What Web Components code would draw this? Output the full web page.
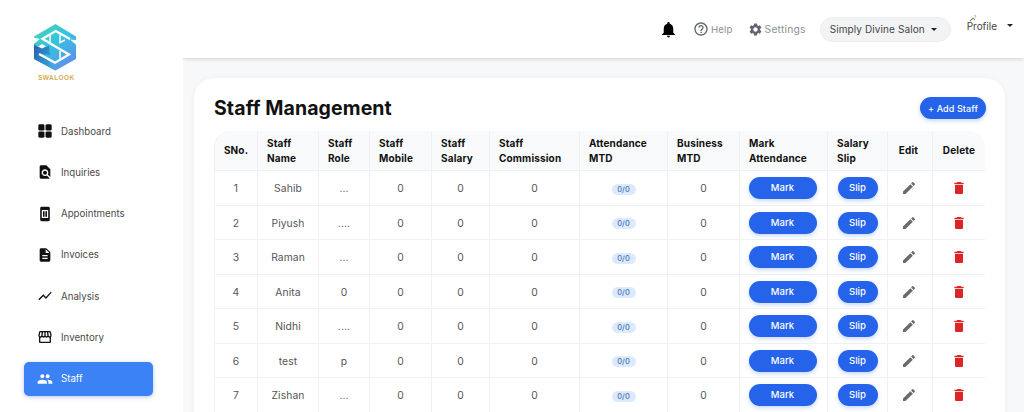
<!DOCTYPE html>
<html lang="en"><head><meta charset="utf-8"><title>Staff Management</title>
<style>
html,body{margin:0;height:412px;overflow:hidden;background:#f7f8fa;font-family:Inter,"Noto Sans",sans-serif}
</style></head><body>
<app-shell>
  <side-nav slot="side">
    <nav-item icon="dash">Dashboard</nav-item>
    <nav-item icon="inq">Inquiries</nav-item>
    <nav-item icon="appt">Appointments</nav-item>
    <nav-item icon="inv">Invoices</nav-item>
    <nav-item icon="chart">Analysis</nav-item>
    <nav-item icon="store">Inventory</nav-item>
    <nav-item icon="people" active>Staff</nav-item>
  </side-nav>
  <top-bar slot="top"></top-bar>
  <staff-card><staff-table></staff-table></staff-card>
</app-shell>
<script>
const P={
 inq:'<path d="M20 19.59V8l-6-6H6c-1.1 0-1.99.9-1.99 2L4 20c0 1.1.89 2 1.99 2H18c.45 0 .85-.15 1.19-.4l-4.43-4.43c-.8.52-1.74.83-2.76.83-2.76 0-5-2.24-5-5s2.24-5 5-5 5 2.24 5 5c0 1.02-.31 1.96-.83 2.75L20 19.59zM9 13c0 1.66 1.34 3 3 3s3-1.34 3-3-1.34-3-3-3-3 1.34-3 3z"/>',
 dash:'<rect x="2" y="2" width="9.2" height="9.2" rx="2"/><rect x="12.8" y="2" width="9.2" height="9.2" rx="2"/><rect x="2" y="12.8" width="9.2" height="9.2" rx="2"/><rect x="12.8" y="12.8" width="9.2" height="9.2" rx="2"/>',
 appt:'<path fill-rule="evenodd" d="M7 1h10c1.3 0 2.2.9 2.2 2.2v17.6c0 1.3-.9 2.2-2.2 2.2H7c-1.3 0-2.2-.9-2.2-2.2V3.200C4.800 1.900 5.700 1 7 1zM7.200 6v12h9.600V6z"/><path d="M9 8h2.400v8H9zM12.600 8H15v8h-2.400z"/>',
 inv:'<path d="M14 2H6c-1.1 0-1.99.9-1.99 2L4 20c0 1.1.89 2 1.99 2H18c1.1 0 2-.9 2-2V8l-6-6zm2 16H8v-2h8v2zm0-4H8v-2h8v2zm-3-5V3.500L18.500 9H13z"/>',
 chart:'<path d="M3.500 18.490l6-6.010 4 4L22 6.920l-1.410-1.410-7.090 7.970-4-4L2 16.990z"/>',
 store:'<path d="M21.900 8.890l-1.050-4.370c-.22-.9-1-1.520-1.910-1.520H5.050c-.9 0-1.690.63-1.900 1.520L2.100 8.890c-.24 1.020-.02 2.060.62 2.880.08.11.19.19.28.29V19c0 1.100.9 2 2 2h14c1.100 0 2-.9 2-2v-6.940c.09-.09.2-.18.28-.28.64-.82.87-1.870.62-2.890zm-2.990-3.900l1.050 4.370c.1.42.01.84-.25 1.170-.14.18-.44.47-.94.47-.61 0-1.140-.49-1.210-1.140L16.980 5l1.930-.01zM13 5h1.960l.54 4.520c.05.39-.07.78-.33 1.070-.22.26-.54.41-.95.41-.67 0-1.220-.59-1.220-1.310V5zM8.490 9.520L9.040 5H11v4.690c0 .72-.55 1.310-1.290 1.310-.34 0-.65-.15-.89-.41-.25-.29-.37-.68-.33-1.070zm-4.450-.16L5.050 5h1.970l-.58 4.860c-.08.65-.6 1.140-1.210 1.140-.49 0-.8-.29-.93-.47-.27-.32-.36-.75-.26-1.170zM5 19v-6.030c.08.01.15.03.23.03.87 0 1.660-.36 2.240-.95.6.6 1.400.95 2.310.95.87 0 1.650-.36 2.230-.93.59.57 1.390.93 2.290.93.84 0 1.640-.35 2.240-.95.58.59 1.370.95 2.240.95.08 0 .15-.02.23-.03V19H5z"/>',
 people:'<path d="M16 11c1.660 0 2.990-1.340 2.990-3S17.660 5 16 5c-1.660 0-3 1.340-3 3s1.340 3 3 3zm-8 0c1.660 0 2.990-1.340 2.990-3S9.660 5 8 5C6.340 5 5 6.340 5 8s1.340 3 3 3zm0 2c-2.330 0-7 1.170-7 3.500V19h14v-2.500c0-2.330-4.670-3.500-7-3.500zm8 0c-.29 0-.62.02-.97.05 1.160.84 1.970 1.970 1.970 3.450V19h6v-2.500c0-2.330-4.670-3.500-7-3.500z"/>',
 bell:'<path d="M12 22c1.100 0 2-.9 2-2h-4c0 1.100.89 2 2 2zm6-6v-5c0-3.070-1.640-5.640-4.500-6.320V4c0-.83-.67-1.500-1.500-1.500s-1.500.67-1.500 1.500v.68C7.630 5.360 6 7.920 6 11v5l-2 2v1h16v-1l-2-2z"/>',
 help:'<path d="M11 18h2v-2h-2v2zm1-16C6.480 2 2 6.480 2 12s4.480 10 10 10 10-4.480 10-10S17.520 2 12 2zm0 18c-4.410 0-8-3.590-8-8s3.590-8 8-8 8 3.590 8 8-3.590 8-8 8zm0-14c-2.210 0-4 1.790-4 4h2c0-1.100.9-2 2-2s2 .9 2 2c0 2-3 1.750-3 5h2c0-2.250 3-2.500 3-5 0-2.210-1.790-4-4-4z"/>',
 gear:'<path d="M19.140 12.940c.04-.3.06-.61.06-.94 0-.32-.02-.64-.07-.94l2.030-1.580a.49.49 0 0 0 .12-.61l-1.920-3.320a.488.488 0 0 0-.59-.22l-2.390.96c-.5-.38-1.030-.7-1.620-.94l-.36-2.540a.484.484 0 0 0-.48-.41h-3.840c-.24 0-.43.17-.47.41l-.36 2.540c-.59.24-1.130.57-1.620.94l-2.390-.96c-.22-.08-.47 0-.59.22L2.740 8.870c-.12.21-.08.47.12.61l2.030 1.580c-.05.3-.09.63-.09.94s.02.64.07.94l-2.030 1.580a.49.49 0 0 0-.12.61l1.920 3.320c.12.22.37.29.59.22l2.390-.96c.5.38 1.030.7 1.620.94l.36 2.540c.05.24.24.41.48.41h3.840c.24 0 .44-.17.47-.41l.36-2.540c.59-.24 1.130-.56 1.620-.94l2.390.96c.22.08.47 0 .59-.22l1.920-3.320c.12-.22.07-.47-.12-.61l-2.010-1.580zM12 15.600c-1.980 0-3.600-1.620-3.600-3.600s1.620-3.600 3.600-3.600 3.600 1.620 3.600 3.600-1.620 3.600-3.600 3.600z"/>',
 edit:'<path d="M3 17.250V21h3.750L17.810 9.940l-3.750-3.750L3 17.250zM20.710 7.040c.39-.39.39-1.020 0-1.410l-2.340-2.340c-.39-.39-1.020-.39-1.410 0l-1.830 1.830 3.750 3.750 1.830-1.830z"/>',
 del:'<path d="M6 19c0 1.100.9 2 2 2h8c1.100 0 2-.9 2-2V7H6v12zM19 4h-3.500l-1-1h-5l-1 1H5v2h14V4z"/>'
};
const icon=(n,s,c='currentColor')=>`<svg width="${s}" height="${s}" viewBox="0 0 24 24" fill="${c}" aria-hidden="true">${P[n]}</svg>`;
const def=(name,html)=>customElements.define(name,class extends HTMLElement{
  constructor(){super();this.attachShadow({mode:'open'}).innerHTML=typeof html==='function'?html(this):html}
  connectedCallback(){if(typeof html==='function')this.shadowRoot.innerHTML=html(this)}
});
def('app-shell',`<style>
:host{display:grid;grid-template-columns:183px 1fr;grid-template-rows:58px 1fr;height:412px;overflow:hidden}
.s{grid-row:1/3;display:block;position:relative;z-index:2}
.t{z-index:1}
main{padding:20px 19px 0 11px;overflow:hidden;min-width:0}
</style><div class="s"><slot name="side"></slot></div><div class="t"><slot name="top"></slot></div><main><slot></slot></main>`);
def('side-nav',`<style>
:host{display:flex;flex-direction:column;height:412px;background:#fff;font-family:Inter,sans-serif;box-sizing:border-box;padding:24px 30px 0 24px}
.logo{display:flex;flex-direction:column;align-items:flex-start;padding-left:10px;height:90px}
.logo svg{display:block}
.logo span{font:700 6.500px/8px "Liberation Sans",sans-serif;letter-spacing:.45px;color:#d4ad55;margin:3px 0 0 4px}
.list{display:flex;flex-direction:column;gap:7.300px}
</style><div class="logo"><svg width="42" height="47" viewBox="0 0 42 47" aria-label="Swalook logo">
<defs><linearGradient id="g" x1="0" y1="0" x2=".7" y2="1"><stop offset="0" stop-color="#4bd8ad"/><stop offset=".5" stop-color="#34c2e2"/><stop offset="1" stop-color="#5f8fea"/></linearGradient>
<linearGradient id="h" x1="0" y1="0" x2="1" y2=".6"><stop offset="0" stop-color="#2a5fab"/><stop offset="1" stop-color="#35a9de"/></linearGradient></defs>
<path fill="url(#g)" d="M21.500 0 42 12.500V35L21.500 46.500 0 35V12.500z"/>
<path fill="url(#h)" d="M0 20.500 4 23 8 20.500 12 23 15 21.500 16 31 6 30 14 36 21.500 46.500 0 35z"/>
<path fill="#fff" d="M-1 13.500 6 15 -1 20.500zM43 16 36 15.500 43 21.500zM4 22.500 8 20 12 22.500 8 24.500z"/>
<path fill="none" stroke="#fff" stroke-width="2.300" stroke-linejoin="miter" d="M36 15 21.700 7 8.500 14.800 21 22.200 35 30.500 21 38.800 5 30"/>
<path fill="none" stroke="#fff" stroke-width="1.500" d="M16 10.500V19M26 10V18.500L31 16M26 27V36"/>
</svg><span>SWALOOK</span></div><div class="list"><slot></slot></div>`);
def('nav-item',h=>`<style>
:host{display:block}
a{display:flex;align-items:center;height:34px;box-sizing:border-box;padding-left:13px;gap:8px;border-radius:5px;font-size:9.700px;font-weight:400;color:#4a4a4a;text-decoration:none}
a.on{background:#3b82f6;color:#fff;box-shadow:0 1px 4px rgba(30,64,175,.3)}
a svg{color:#111;flex:none;width:16px;height:16px}
a.on svg{color:#fff}
</style><a class="${h.hasAttribute('active')?'on':''}" href="#">${icon(h.getAttribute('icon')||'dash',16)}<slot></slot></a>`);
def('top-bar',`<style>
:host{display:flex;align-items:center;justify-content:flex-end;height:58px;background:#fff;box-shadow:0 1px 4px rgba(0,0,0,.16);font-family:Inter,sans-serif;font-size:10.300px;letter-spacing:.2px;color:#8a8f96;padding-right:11px;box-sizing:border-box}
.b{color:#000;display:flex;margin-right:14.500px}
.l{display:flex;align-items:center;gap:2px}
.l svg{color:#5f6670}
.help{margin-right:15px}
.help span{font-size:9.600px}
.set{margin-right:14px}
.pill{display:flex;align-items:center;justify-content:space-between;box-sizing:border-box;width:131px;height:25px;border-radius:13px;background:#f1f3f5;border:1px solid #eceef0;padding:0 13px 0 9px;color:#444;font-weight:400;font-size:10px;letter-spacing:.1px;margin-right:16px}
.car{width:0;height:0;border:3px solid transparent;border-top:3.500px solid #222;border-bottom:0;display:block}
.pro{display:flex;flex-direction:column;color:#444;font-size:10px;letter-spacing:0;line-height:12px;margin-right:10px;margin-top:-12px}
.pro svg{display:block;margin:0 0 -2px 2px}
</style>
<span class="b">${icon('bell',19)}</span>
<span class="l help">${icon('help',16)}<span>Help</span></span>
<span class="l set">${icon('gear',15)}<span>Settings</span></span>
<span class="pill"><span>Simply Divine Salon</span><i class="car"></i></span>
<span class="pro"><svg width="9" height="8" viewBox="0 0 9 8" aria-hidden="true"><path d="M1 7l3-3 2 2" fill="none" stroke="#7a9a6a" stroke-width="1.100"/><path d="M5 1l2 1-1 2" fill="none" stroke="#aaa" stroke-width=".8"/></svg><span>Profile</span></span>
<i class="car" style="margin-top:-8px"></i>`);
def('staff-card',`<style>
:host{display:block;background:#fff;border-radius:20px 20px 0 0;padding:19px 19px 0 20px;box-shadow:0 0 6px rgba(0,0,0,.04);font-family:Inter,sans-serif;height:400px;box-sizing:border-box}
header{display:flex;justify-content:space-between;align-items:center;height:22px;margin-bottom:12px}
h1{margin:0;font-size:19.500px;font-weight:700;color:#111;letter-spacing:.1px}
button{font:500 9px Inter,sans-serif;letter-spacing:.1px;color:#fff;background:#2563eb;border:0;border-radius:11px;width:66px;height:22px;padding:0;box-shadow:0 2px 4px rgba(37,99,235,.25)}
</style><header><h1>Staff Management</h1><button>+ Add Staff</button></header><slot></slot>`);
const rows=[['Sahib','...'],['Piyush','....'],['Raman','...'],['Anita','0'],['Nidhi','....'],['test','p'],['Zishan','...']];
const W=[44,61,51,62,58,90,88,72,88,60,45,52];
const H=[['SNo.',1],['Staff<br>Name'],['Staff<br>Role'],['Staff<br>Mobile'],['Staff<br>Salary'],['Staff<br>Commission'],['Attendance<br>MTD'],['Business<br>MTD'],['Mark<br>Attendance'],['Salary<br>Slip'],['Edit',1],['Delete',1]];
def('staff-table',`<style>
:host{display:block}
table{border-collapse:separate;border-spacing:0;table-layout:fixed;width:771px;font-size:10.300px;color:#555}
th{height:40px;padding:0 0 0 9px;box-sizing:border-box;background:#f8fafb;color:#111;font-weight:700;text-align:left;line-height:14.500px;font-size:10px;letter-spacing:.15px;border-right:1px solid #eef0f2;border-bottom:1px solid #eef0f2}
th.c{text-align:center;padding:0}
th.e{padding-right:3px}
th:first-child{border-top-left-radius:16px;border-left:1px solid #eef0f2}
th:last-child{border-top-right-radius:16px;border-right:0}
td{height:34.500px;padding:1px 0 0;box-sizing:border-box;text-align:center;border-right:1px solid #eff1f3;border-bottom:1px solid #eff1f3;letter-spacing:.1px}
td:first-child{border-left:1px solid #eff1f3}
td:last-child{border-right:0}
.tag{display:inline-block;background:#dbeafe;color:#4c74b0;font-size:7.500px;font-weight:500;border-radius:6px;width:24px;height:11px;line-height:11px;vertical-align:middle;letter-spacing:0}
.btn{display:inline-block;background:#2563eb;color:#fff;font-weight:500;font-size:9.500px;border-radius:11px;height:22px;line-height:22px;box-shadow:0 2px 4px rgba(37,99,235,.25);vertical-align:middle}
.m{width:68px;margin-right:2px}.sl{width:40px}
svg{vertical-align:middle}
.pen{margin-right:2px}
</style><table><colgroup>${W.map(w=>`<col style="width:${w}px">`).join('')}</colgroup>
<thead><tr>${H.map(([t,c])=>`<th class="${c?'c':''} ${t==='Edit'?'e':''}">${t}</th>`).join('')}</tr></thead>
<tbody>${rows.map((r,i)=>`<tr><td>${i+1}</td><td>${r[0]}</td><td>${r[1]}</td><td>0</td><td>0</td><td>0</td><td><span class="tag">0/0</span></td><td>0</td><td><span class="btn m">Mark</span></td><td><span class="btn sl">Slip</span></td><td><span class="pen">${icon('edit',16,'#6b6b6b')}</span></td><td>${icon('del',16,'#dc2626')}</td></tr>`).join('')}</tbody></table>`);
</script>
</body></html>
